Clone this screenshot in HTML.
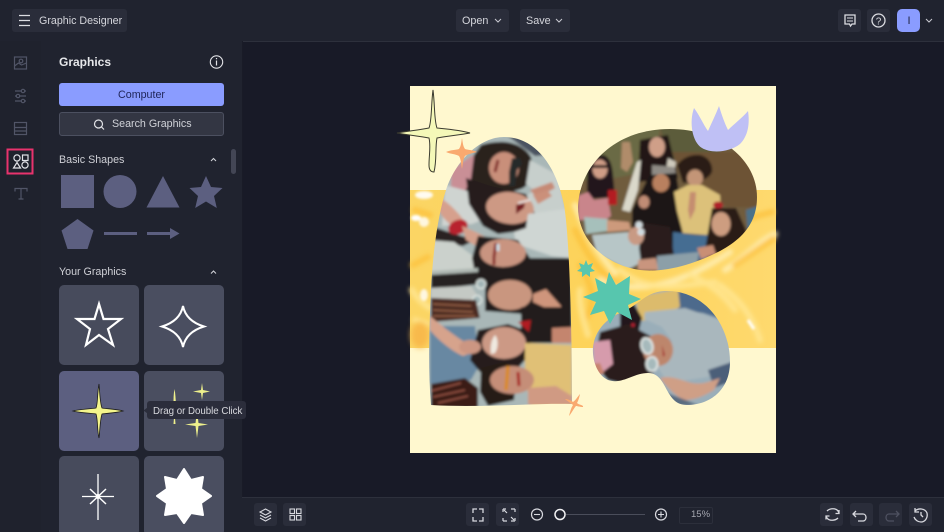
<!DOCTYPE html>
<html><head><meta charset="utf-8"><title>Graphic Designer</title>
<style>
html,body{margin:0;padding:0;background:#181a27;overflow:hidden;height:532px}
body{width:944px;position:relative;font-family:"Liberation Sans",sans-serif}
.a{position:absolute}
.t{position:absolute;white-space:nowrap;line-height:1}
.btn{position:absolute;background:#2a2d3a;border-radius:3px}
.cell{position:absolute;width:80px;height:80px;background:#474b5c;border-radius:5px;overflow:hidden}
svg{position:absolute;left:0;top:0}
</style></head>
<body>
<div class="a" style="left:0;top:0;width:944px;height:41px;background:#20232f;border-bottom:1px solid #2d303c"></div>
<div class="a" style="left:0;top:41px;width:41px;height:491px;background:#1f222d;border-right:1px solid #2a2d39"></div>
<div class="a" style="left:41px;top:41px;width:201px;height:491px;background:#20232f;border-right:1px solid #191b27"></div>
<div class="a" style="left:242px;top:497px;width:702px;height:35px;background:#20232f;border-top:1px solid #2d303c"></div>

<div class="btn" style="left:12px;top:9px;width:115px;height:23px"></div>
<div class="t" style="left:39px;top:16px;font-size:10.7px;color:#d5d6dc">Graphic Designer</div>
<div class="btn" style="left:456px;top:9px;width:53px;height:23px"></div>
<div class="t" style="left:462px;top:16px;font-size:10.8px;color:#d5d6dc">Open</div>
<div class="btn" style="left:520px;top:9px;width:50px;height:23px"></div>
<div class="t" style="left:526px;top:16px;font-size:10.8px;color:#d5d6dc">Save</div>
<div class="btn" style="left:838px;top:9px;width:23px;height:23px"></div>
<div class="btn" style="left:867px;top:9px;width:23px;height:23px"></div>
<div class="a" style="left:897px;top:9px;width:23px;height:23px;background:#8a9cff;border-radius:5px"></div>
<div class="t" style="left:905px;top:16px;font-size:11px;color:#1e2340;width:8px;text-align:center">I</div>

<div class="t" style="left:59px;top:56px;font-size:12px;font-weight:bold;color:#e6e7ea">Graphics</div>
<div class="a" style="left:59px;top:83px;width:165px;height:23px;background:#8a9cff;border-radius:3px"></div>
<div class="t" style="left:59px;top:90px;width:165px;text-align:center;font-size:10.7px;color:#20265a">Computer</div>
<div class="a" style="left:59px;top:112px;width:163px;height:22px;background:#333643;border:1px solid #4c5060;border-radius:3px"></div>
<div class="t" style="left:112px;top:119px;font-size:10.7px;color:#d0d2d8">Search Graphics</div>
<div class="t" style="left:59px;top:155px;font-size:10.7px;color:#cfd0d6">Basic Shapes</div>
<div class="t" style="left:59px;top:267px;font-size:10.7px;color:#cfd0d6">Your Graphics</div>
<div class="a" style="left:231px;top:149px;width:5px;height:25px;background:#434655;border-radius:3px"></div>

<div class="cell" style="left:59px;top:285px"></div>
<div class="cell" style="left:144px;top:285px;background:#4a4e60"></div>
<div class="cell" style="left:59px;top:371px;background:#5c5f80"></div>
<div class="cell" style="left:144px;top:371px;background:#4a4e60"></div>
<div class="cell" style="left:59px;top:456px"></div>
<div class="cell" style="left:144px;top:456px;background:#4a4e60"></div>

<div class="btn" style="left:254px;top:503px;width:23px;height:23px"></div>
<div class="btn" style="left:283px;top:503px;width:23px;height:23px"></div>
<div class="btn" style="left:466px;top:503px;width:23px;height:23px"></div>
<div class="btn" style="left:496px;top:503px;width:23px;height:23px"></div>
<div class="a" style="left:679px;top:507px;width:32px;height:15px;border:1px solid #2c2f3b;border-radius:2px"></div>
<div class="t" style="left:691px;top:510px;font-size:9.5px;color:#a5a7b0">15%</div>
<div class="btn" style="left:820px;top:503px;width:23px;height:23px"></div>
<div class="btn" style="left:850px;top:503px;width:23px;height:23px"></div>
<div class="btn" style="left:879px;top:503px;width:23px;height:23px"></div>
<div class="btn" style="left:909px;top:503px;width:23px;height:23px"></div>

<svg width="944" height="532" viewBox="0 0 944 532" xmlns="http://www.w3.org/2000/svg">
<defs>
<filter id="b1" x="-20%" y="-20%" width="140%" height="140%"><feGaussianBlur stdDeviation="1.4"/></filter>
<filter id="b2" x="-20%" y="-20%" width="140%" height="140%"><feGaussianBlur stdDeviation="2.2"/></filter>
<filter id="b3" x="-30%" y="-30%" width="160%" height="160%"><feGaussianBlur stdDeviation="3"/></filter>
<clipPath id="cl"><path d="M431 405C428 370 429 330 431 290C433 250 438 215 446 190C456 160 480 137 504 137C535 137 556 165 564 205C570 240 572 340 572 404C530 403 480 408 431 405Z"/></clipPath>
<clipPath id="cc"><path d="M578 207C579 170 610 129 670 129C720 129 757 160 757 197C757 225 740 240 720 251C695 264 665 273 640 270C605 265 578 240 578 207Z"/></clipPath>
<clipPath id="cb"><path d="M667 291C705 291 730 325 730 362C730 390 710 405 687 405C664 405 668 373 648 373C633 373 622 385 608 380C597 375 592 360 593 347C595 330 607 318 622 312C640 305 645 291 667 291Z"/></clipPath>
<linearGradient id="yl" x1="0" y1="0" x2="1" y2="0"><stop offset="0" stop-color="#fbd564"/><stop offset=".5" stop-color="#fdd35a"/><stop offset="1" stop-color="#fed96e"/></linearGradient>
</defs>

<!-- top bar icons -->
<g fill="none" stroke="#dcdde2" stroke-width="1.3">
<path d="M19 15.500H30M19 20.500H30M19 25.500H30"/>
<path d="M495 19l3 3 3-3M556 19l3 3 3-3M926 19l3 3 3-3" stroke="#c8c9d0" stroke-width="1"/>
<path d="M845 15h10v9h-3l-1.500 2-1-2h-4.500z"/><path d="M847 18h6M847 21h6" stroke-width="1"/>
<circle cx="878.500" cy="20.500" r="6.500"/>
</g>
<text x="878.500" y="24.500" font-size="10" font-family="Liberation Sans" fill="#dcdde2" text-anchor="middle">?</text>

<!-- side icons -->
<g fill="none" stroke="#515567" stroke-width="1.200">
<rect x="14.500" y="57" width="12" height="12"/><circle cx="21" cy="61" r="1.800"/><path d="M14.500 66l4-3 3 2 5-2"/>
<path d="M15 91h11M15 96h11M15 101h11"/><circle cx="23" cy="91" r="1.700" fill="#1f222d"/><circle cx="18" cy="96" r="1.700" fill="#1f222d"/><circle cx="23" cy="101" r="1.700" fill="#1f222d"/>
<rect x="14.500" y="122.500" width="12" height="12"/><path d="M14.500 127.500h12M14.500 131h12"/>
<path d="M15 191.500v-3h12v3M21 188.500v10.500M18.500 199h5"/>
</g>
<rect x="7.500" y="149.500" width="25" height="24" fill="none" stroke="#e8336d" stroke-width="2"/>
<g fill="none" stroke="#e2e3e8" stroke-width="1.200">
<circle cx="17" cy="158" r="3.100"/><rect x="22.500" y="155" width="5.500" height="5.500"/>
<path d="M17 162.500l3.500 5.500h-7z"/><circle cx="25" cy="165" r="3.100"/>
</g>

<!-- panel icons -->
<circle cx="216.500" cy="62" r="6.200" fill="none" stroke="#e3e4e8" stroke-width="1.100"/>
<path d="M216.500 60.500v5M216.500 58v1.200" stroke="#e3e4e8" stroke-width="1.200"/>
<circle cx="98.500" cy="124" r="4" fill="none" stroke="#e3e4e8" stroke-width="1.200"/>
<path d="M101.500 127l2.500 2.500" stroke="#e3e4e8" stroke-width="1.200"/>
<path d="M211 161l2.500-2.500 2.500 2.500M211 273.500l2.500-2.500 2.500 2.500" fill="none" stroke="#d5d6dc" stroke-width="1"/>

<!-- basic shapes -->
<g fill="#5c5f80">
<rect x="61" y="175" width="33" height="33"/>
<circle cx="120" cy="191.500" r="16.500"/>
<path d="M163 176l16.500 31.500h-33z"/>
<path d="M206 176l5 11 11.500 1-8.500 8 2.800 12-10.800-6.500-10.800 6.500 2.800-12-8.500-8 11.500-1z"/>
<path d="M77.500 219l16 11.500-6 18.500h-20l-6-18.500z"/>
<rect x="104" y="232" width="33" height="3"/>
<path d="M147 232h23v-4l9.500 5.500-9.500 5.500v-4h-23z"/>
</g>

<!-- your graphics -->
<path d="M99 304L103.500 319 121 319 108 329 113 345 99 335 86 345 90 329 77 319 94.500 319Z" fill="none" stroke="#fff" stroke-width="2.200" stroke-linejoin="miter"/>
<path d="M183 306Q186 321 204 326.500Q186 332 183 347Q180 332 162 326.500Q180 321 183 306Z" fill="none" stroke="#fff" stroke-width="2"/>
<path d="M99 384C100 395 100 403 102 408C108 409 116 409 123 411C116 413 108 413 102 414C100 420 100 430 99 438C97 430 98 420 96 414C90 413 80 413 73 411C80 409 90 409 96 408C98 403 97 395 99 384Z" fill="#f4f58c" stroke="#1c1c1c" stroke-width=".8"/>
<g fill="#eef08c">
<path d="M174.500 389c1 5 1 10 1.500 15 0 4-.5 8-1.500 12-.8-4-1.200-8-1-12 0-5 0-10 1-15z"/>
<path d="M174.500 412l1 12h-2z"/>
<path d="M202 383l1 7 7 1.500-7 1.500-1 7-1-7-8-1.500 8-1.500z"/>
<path d="M197 411l1.500 12 9.500 1.500-9.500 1.500-1.500 12-1.500-12-10.500-1.500 10.500-1.500z"/>
</g>
<g stroke="#fff" fill="none">
<path d="M98 474v46M82 496.500h32" stroke-width="1.300"/>
<path d="M90 489l16 15M106 489l-16 15" stroke-width="1.500"/>
</g>
<circle cx="98" cy="496.500" r="2.500" fill="#fff"/>
<path d="M184 469L191 480 203 477 201 489 211 496 201 503 203 515 191 513 184 523 177 513 165 515 167 503 157 496 167 489 165 477 177 480Z" fill="#fff" stroke="#fff" stroke-width="2" stroke-linejoin="round"/>

<!-- Canvas -->
<rect x="410" y="86" width="366" height="367" fill="#fff8cf"/>
<rect x="410" y="190" width="366" height="158" fill="url(#yl)"/>
<g filter="url(#b2)" fill="none" stroke-linecap="round">
<g stroke="#fff0b8" stroke-width="6" opacity=".8">
<path d="M575 205c8 20 18 42 40 68M600 280c30 12 70 12 130-28"/>
<path d="M725 270c20-12 35-30 50-36"/>
</g>
<g stroke="#fcc03a" stroke-width="6" opacity=".75">
<path d="M575 230c12 25 25 45 45 55M585 320c15-22 3-40-5-55M742 220l30-8M735 265l38-26"/>
<path d="M415 210l15 5M413 265l15-8"/>
</g>
<g stroke="#ffe690" stroke-width="6" opacity=".9">
<path d="M580 290c-2 15 5 35 8 45M720 285c20 15 32 30 40 55M690 275c20 8 34 20 45 35M620 270c30 25 60 15 95 12"/>
<path d="M412 290c6 10 12 14 18 18M415 320l12 4"/>
</g>
</g>
<g filter="url(#b1)" fill="#fff"><ellipse cx="424" cy="195" rx="9" ry="4" opacity=".9"/><ellipse cx="416" cy="218" rx="5" ry="3"/><ellipse cx="424" cy="222" rx="5" ry="5" opacity=".8"/><ellipse cx="424" cy="295" rx="4" ry="6" opacity=".8"/><path d="M748 320l6 9" stroke="#fff" stroke-width="3"/></g>
<ellipse cx="420" cy="335" rx="9" ry="13" fill="#f8b94c" filter="url(#b3)"/>

<!-- left arch -->
<g clip-path="url(#cl)"><g filter="url(#b1)">
<rect x="425" y="135" width="152" height="275" fill="#a9b7b7"/>
<path d="M505 134l35 0 20 20-25 2z" fill="#4b5360"/>
<path d="M451 170l22-15 8 8 0 30-12 4-18-4z" fill="#c98f96"/>
<path d="M481 145c20-6 40-4 50 12 3 15 0 28-10 32l-20 6-25 2-11-6 6-12 3-24z" fill="#2a211f"/>
<ellipse cx="504" cy="168" rx="15" ry="16" fill="#c98f7a"/>
<path d="M512 158l8 0 2 6-5 6-2 16-6 0 0-14z" fill="#282a2b"/>
<path d="M498 160l-3 12" stroke="#84302f" stroke-width="3"/>
<path d="M530 160l28 15 10 45-50-10 6-12 10-8-8-6z" fill="#c7cfcc"/>
<path d="M530 190l22-8 3 6-18 10z" fill="#c68a76"/>
<path d="M445 185l30 8 12 25-15 6-30 2z" fill="#cfd4d1"/>
<path d="M440 198c8 4 18 14 25 24l-8 6c-10-4-18-14-21-24z" fill="#d6a08d"/>
<path d="M431 226l24 8 20 6-12 6-32-4z" fill="#2a2424"/>
<path d="M429 240l25 2 30 22 2 16-55 0z" fill="#cbd1cc"/>
<ellipse cx="458" cy="227" rx="10" ry="7" fill="#b8242f" transform="rotate(-22 458 227)"/>
<path d="M462 226c10 4 22 10 30 14l2 8-8 4-20-12z" fill="#d4a08c"/>
<path d="M466 178l24 8 36 8 10 22-8 14-30 4-15-8-14-22z" fill="#251c1a"/>
<ellipse cx="510" cy="208" rx="24" ry="16" fill="#cd9984" transform="rotate(6 510 208)"/>
<path d="M516 205l9-2-1 5-8 6z" fill="#751c20"/>
<path d="M518 203l12-3" stroke="#eee" stroke-width="1.500"/>
<path d="M528 214l44-6 0 50-20-2-36-12 -2-12 12-4z" fill="#cfd6d3"/>
<path d="M533 195l14-5 5 6-14 8z" fill="#cb907a"/>
<path d="M478 236l40 4 12 18 42 0 0 22-50 2-46-2-4-22z" fill="#241d1d"/>
<ellipse cx="503" cy="253" rx="23" ry="14" fill="#c99480"/>
<path d="M496 243l-2 14 0 8" stroke="#8a2a2c" stroke-width="3"/>
<path d="M498 244l0 7" stroke="#cfe0e8" stroke-width="3"/>
<path d="M431 271l47-3 0 6-47 3z" fill="#aeb7b2"/>
<path d="M431 275l47-3 2 12-49 6z" fill="#272422"/>
<path d="M431 288l40-2 8 12-20 4-28-2z" fill="#c4c9c4"/>
<path d="M485 268l87 0 0 45-10 4-77-6z" fill="#211b1b"/>
<ellipse cx="510" cy="295" rx="22" ry="15" fill="#c9967f"/>
<path d="M533 294l13-5 15 17 0 6-15-4-13-6z" fill="#cf957c"/>
<circle cx="481" cy="284" r="4.500" fill="#a0b4b5" stroke="#dfe6e2" stroke-width="1.500"/>
<circle cx="477" cy="300" r="4.500" fill="#a0b4b5" stroke="#dfe6e2" stroke-width="1.500"/>
<path d="M521 307l51 0 0 36-51 0z" fill="#211a1a"/>
<path d="M552 328l20-1 0 16-20 0z" fill="#c4856e"/>
<path d="M431 298l45 2 4 18-49 4z" fill="#4c2a22"/>
<g stroke="#a36a4b" stroke-width="1.300"><path d="M433 304l38 2M433 310l40 2M433 316l42 0"/></g>
<path d="M430 326l45 0 4 40-8 14-41 4z" fill="#6888a2"/>
<path d="M430 316c12 10 25 20 33 25l8 12-8 3c-10-4-25-16-33-26z" fill="#d6a38c"/>
<path d="M478 330l30-6 22 8 0 22-12 14-38 4-10-12z" fill="#271d1b"/>
<ellipse cx="504" cy="343" rx="22" ry="16" fill="#cc9985"/>
<ellipse cx="470" cy="347" rx="11" ry="7" fill="#cc9682"/>
<path d="M495 335c3 3 4 12 0 18l-4 1c-1-7 0-14 4-19z" fill="#efe9e0"/>
<path d="M518 322l13-2-2 12z" fill="#b01d22"/>
<path d="M525 343l47 2 0 62-40 0-7-25z" fill="#e0c076"/>
<path d="M481 368l24-6 12 8-3 30-26 6-8-14z" fill="#271b18"/>
<ellipse cx="512" cy="380" rx="22" ry="14" fill="#c58e78"/>
<path d="M508 366l-2 24" stroke="#d98a28" stroke-width="3.500"/>
<path d="M518 372l1 14" stroke="#a72124" stroke-width="3"/>
<path d="M528 388l28-2 16 10 0 9-44 0z" fill="#d09a83"/>
<path d="M431 384l34-6 13 10 0 20-47 0z" fill="#3a1f18"/>
<g stroke="#a55a4c" stroke-width="1.300"><path d="M431 391l30-8M433 397l32-7M438 403l30-7"/></g>
</g></g>

<!-- circle photo -->
<g clip-path="url(#cc)"><g filter="url(#b1)">
<rect x="575" y="125" width="190" height="150" fill="#6f5c3e"/>
<path d="M590 128l70 0 -5 42-50 10-25 0z" fill="#6b6a44"/>
<path d="M660 128l60 0 0 25-50 5z" fill="#5b5c3a"/>
<path d="M672 152l85 0 0 55-30 0-40-25z" fill="#6d5236"/>
<path d="M622 142l8 0 3 20-6 10-6-4z" fill="#b08c6b"/>
<path d="M587 168c2-8 10-13 16-13 7 2 9 10 10 20l2 22-28 2z" fill="#24191a"/>
<ellipse cx="600" cy="169" rx="7.500" ry="9.500" fill="#cf9d86"/>
<path d="M592 165h16v3h-16z" fill="#151515"/>
<path d="M578 196l10-4 6 8 14-2 3 18-6 4-27 0z" fill="#c9858b"/>
<path d="M584 217l24 2 1 12-23 3z" fill="#a6c0bb"/>
<path d="M607 220l22 2 2 8-24 2z" fill="#cd9a7c"/>
<rect x="608" y="190" width="9" height="15" rx="1" fill="#b31a22"/>
<path d="M640 140l28-5 6 25 4 18-40 4z" fill="#231817"/>
<ellipse cx="657" cy="147" rx="8" ry="10" fill="#cf9f88"/>
<path d="M637 162l4-2-3 30-8 22-8-2 8-26z" fill="#dad8ca"/>
<path d="M668 158l8 4-2 10-8-2z" fill="#cfcabc"/>
<path d="M652 170l24 2 6 40 0 40-30-6-20-12 0-24z" fill="#1b1615"/>
<path d="M652 165l22 2 2 6-24 2z" fill="#8f8b85"/>
<ellipse cx="661" cy="183" rx="8.500" ry="9" fill="#b9805f"/>
<ellipse cx="644" cy="202" rx="5.500" ry="6.500" fill="#c08c74"/>
<path d="M677 165c6-8 15-11 23-10 9 2 13 10 12 17-3 6-8 8-15 9l-14 2z" fill="#2a1c18"/>
<ellipse cx="695" cy="178" rx="8" ry="8.500" fill="#c39577"/>
<path d="M674 192l14-7 14 0 18 10 1 18-11 14-3 8-24-2-6-22z" fill="#dcc17a"/>
<path d="M690 192l-2 18 2 10 5-10 1-18z" fill="#c58d70"/>
<path d="M673 232l24 3 12 0 0 25-36 0z" fill="#456d92"/>
<path d="M712 208l24 0 10 22-2 22-28 10-12-6z" fill="#2b1b17"/>
<ellipse cx="721" cy="224" rx="9.500" ry="12" fill="#cd9d80"/>
<ellipse cx="718" cy="205" rx="5" ry="3.500" fill="#b0212a"/>
<path d="M697 248l16-3 3 9-15 5z" fill="#c98f75"/>
<path d="M746 210l12-4 0 25-10 4z" fill="#4c7189"/>
<path d="M592 235l38-3 12 8 0 22-15 8-30-16z" fill="#b7c6c7"/>
<path d="M643 223l27 4 4 28-12 12-20 3-3-22z" fill="#2a1f1d"/>
<ellipse cx="636" cy="236" rx="8" ry="9" fill="#c89a84"/>
<circle cx="639" cy="225" r="3" fill="#c8d8de" stroke="#eee"/><circle cx="641" cy="232" r="3" fill="#c8d8de" stroke="#eee"/>
<path d="M657 256l42-4-3 18-39 2z" fill="#8c9fa8"/>
<path d="M638 260l18-2 2 12-20 0z" fill="#c9957e"/>
</g></g>

<!-- bottom photo -->
<g clip-path="url(#cb)"><g filter="url(#b1)">
<rect x="590" y="288" width="145" height="120" fill="#9aaeb9"/>
<path d="M678 288l35 5 20 30-30-10-25-3z" fill="#4e6a8c"/>
<path d="M635 297l43-8 2 18-26 12-14 2z" fill="#dcbb6c"/>
<path d="M620 306l14-2 8 14-4 16-18 0z" fill="#24191a"/>
<path d="M600 332l28-8 30 16 6 22-14 14-26 8-16-4-14-16z" fill="#2c1e1b"/>
<path d="M593 342l17-2 3 24-10 8-9-4z" fill="#d69bac"/>
<path d="M592 364l8-1 4 10-6 3z" fill="#c8846e"/>
<path d="M645 312l40-4 40 14 8 40-25 15-40 6-12-18 12-10 4-14-10-14-18-8z" fill="#a9b7bd"/>
<ellipse cx="658" cy="350" rx="15" ry="16" fill="#bd866c"/>
<ellipse cx="647" cy="346" rx="5.500" ry="8" fill="#a6b9bb" stroke="#e2e8e6" stroke-width="2" transform="rotate(-15 647 346)"/>
<ellipse cx="652" cy="364" rx="5.500" ry="7" fill="#a6b9bb" stroke="#e2e8e6" stroke-width="2"/>
<path d="M662 345l3 10-2 2z" fill="#a52a2c"/>
<path d="M708 370l24-8-2 20-16 6z" fill="#4b5f79"/>
<path d="M660 378c12-3 20 2 32 5 12 2 18-2 28-5l-6 12c-10 6-18 10-30 10-10-5-18-14-24-22z" fill="#cf9f86"/>
<path d="M664 392l14 14 20-1-15-6z" fill="#5a6c80"/>
<circle cx="633" cy="325" r="1.800" fill="#bb2030"/>
</g></g>

<!-- teal stars -->
<path d="M609 272l7 13 14-9-1 18 12 5-13 6 4 15-15-8-7 12-6-13-14 4 6-13-13-5 15-6-3-13 11 6z" fill="#57c6ae"/>
<path d="M586 260l2 5 5-2-2 5 4 3-5 1 0 5-4-3-4 3 0-5-5-1 4-3-2-5 5 2z" fill="#57c6ae"/>
<!-- orange stars -->
<path d="M462 138c1 6 1 8 3 11 3 1 8 1 12 3-4 1-9 2-12 4-2 3-2 8-3 13-1-5-1-10-3-13-3-2-9-2-13-4 4-2 10-2 13-3 2-3 2-5 3-11z" fill="#f9a96f"/>
<path d="M580 394c-1 5-2 7-3 9 2 2 7 2 6 4-3 0-6-1-7-1-2 2-5 8-7 10 1-4 2-8 4-11-2-2-6-4-8-6 3 0 7 2 8 3 3-2 5-6 7-8z" fill="#f9a96f"/>
<!-- lilac crown -->
<path d="M694 108C700 116 703 124 708 131C712 122 716 114 719 106C722 116 725 124 728 130C734 124 742 118 748 111C750 124 748 136 740 144C730 152 712 154 702 148C692 142 689 122 694 108Z" fill="#bfc0f5"/>
<!-- big sparkle -->
<path d="M433 90C435 105 434 120 437 128C447 129 460 130 470 133C460 135 447 136 437 138C435 148 437 160 434 172C431 172 429 170 429 165C429 155 431 146 429 138C419 136 407 135 397 133C407 131 420 130 429 128C432 120 431 105 433 90Z" fill="#f4f8b8" stroke="#3b3b30" stroke-width="1"/>

<!-- tooltip -->
<path d="M143.500 410.500l4-3v6z" fill="#2b2d3b"/>
<rect x="147" y="401" width="99" height="18" rx="3" fill="#2b2d3b"/>
<text x="153" y="413.800" font-size="9.700" font-family="Liberation Sans" fill="#d8d9de">Drag or Double Click</text>

<!-- bottom bar icons -->
<g fill="none" stroke="#d8d9df" stroke-width="1.100">
<path d="M265.500 509l5.500 3-5.500 3-5.500-3zM260 515l5.500 3 5.500-3M260 518l5.500 3 5.500-3"/>
<rect x="290" y="509" width="4.500" height="4.500"/><rect x="296.500" y="509" width="4.500" height="4.500"/><rect x="290" y="515.500" width="4.500" height="4.500"/><rect x="296.500" y="515.500" width="4.500" height="4.500"/>
<path d="M473 513v-4h4M479 509h4v4M483 517v4h-4M477 521h-4v-4" stroke-width="1.300"/>
<path d="M503 509h3M511 509h4M503 521h4M511 521h4M503 509v3M515 509v3M503 518v3M515 518v3M507 513l-3-3M511 517l3 3" stroke-width="1.200"/>
<circle cx="537" cy="514.500" r="5.500" stroke-width="1.200"/><path d="M534 514.500h6"/>
<circle cx="661" cy="514.500" r="5.500" stroke-width="1.200"/><path d="M658 514.500h6M661 511.500v6"/>
<path d="M827 511c3-3 9-3 11 0l1 2M838 518c-3 3-9 3-11 0l-1-2M839 510v3.500h-3.500M826 519.500V516h3.500" stroke-width="1.300"/>
<path d="M856 511l-3 3 3 3M853 514h10c4 0 4 7 0 7h-5" stroke-width="1.300"/>
<path d="M896 511l3 3-3 3M899 514h-10c-4 0-4 7 0 7h5" stroke="#4e5160" stroke-width="1.300"/>
<path d="M915 511c3-3 10-3 12 2 1 5-2 9-6 9-3 0-6-2-7-5M915 508v4h4M921 512v3l2 2" stroke-width="1.300"/>
</g>
<path d="M566 514.500H645" stroke="#4a4d5a" stroke-width="1"/>
<circle cx="560" cy="514.500" r="5" fill="#20232f" stroke="#f0f0f2" stroke-width="1.500"/>
</svg>
</body></html>
